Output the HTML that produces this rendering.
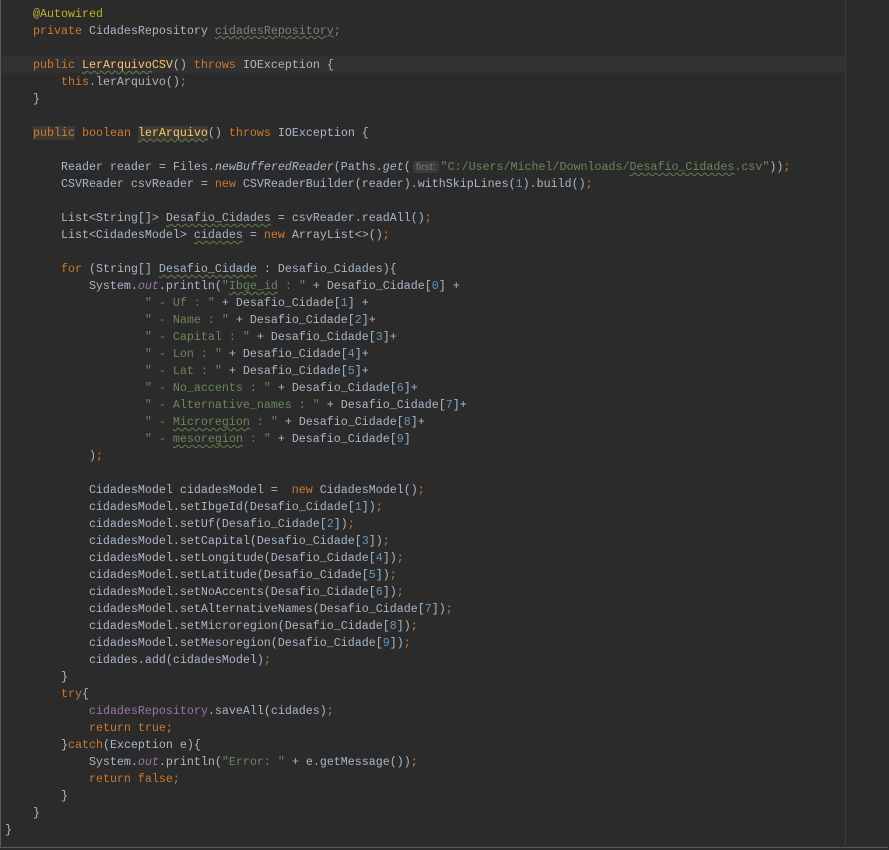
<!DOCTYPE html>
<html><head><meta charset="utf-8"><style>
html,body{margin:0;padding:0;background:#2b2b2b;}
body{width:889px;height:850px;overflow:hidden;position:relative;}
.frame{position:absolute;left:0;top:0;width:888px;height:848px;border-left:1px solid #5a5a5a;border-bottom:1px solid #5a5a5a;box-sizing:border-box;}
.margin{position:absolute;left:845px;top:0;width:1px;height:848px;background:#3c3c3c;}
.cur{position:absolute;left:1px;top:56px;width:844px;height:17px;background:#313131;}
pre{position:absolute;left:5px;top:6px;margin:0;font-family:"Liberation Mono",monospace;font-size:11.67px;line-height:17px;color:#a9b7c6;}
.k{color:#cc7832}.s{color:#6a8759}.a{color:#bbb529}.f{color:#9876aa}.n{color:#6897bb}.m{color:#ffc66d}.i{font-style:italic}
.w{text-decoration:underline wavy #6a7a4a;text-decoration-thickness:1px;text-underline-offset:2px}
.g{color:#808080;text-decoration:underline wavy #6a7a4a;text-decoration-thickness:1px}
.h{background:#3b3b34}
.hint{background:#3b3b3b;color:#7a7a7a;font-family:"Liberation Sans",sans-serif;font-size:10.5px;padding:0 3px;border-radius:3px;margin:0 2px}
</style></head><body>
<div class="frame"></div>
<div class="cur"></div>
<div class="margin"></div>
<pre>    <span class="a">@Autowired</span>
    <span class="k">private</span> CidadesRepository <span class="g">cidadesRepository</span><span class="k">;</span>

    <span class="k">public</span> <span class="m"><span class="w">LerArquivo</span>CSV</span>() <span class="k">throws</span> IOException {
        <span class="k">this</span>.lerArquivo()<span class="k">;</span>
    }

    <span class="k h">public</span> <span class="k">boolean</span> <span class="m w h">lerArquivo</span>() <span class="k">throws</span> IOException {

        Reader reader = Files.<span class="i">newBufferedReader</span>(Paths.<span class="i">get</span>(<span class="hint">first:</span><span class="s">"C:/Users/Michel/Downloads/<span class="w">Desafio_Cidades</span>.csv"</span>))<span class="k">;</span>
        CSVReader csvReader = <span class="k">new</span> CSVReaderBuilder(reader).withSkipLines(<span class="n">1</span>).build()<span class="k">;</span>

        List&lt;String[]&gt; <span class="w">Desafio_Cidades</span> = csvReader.readAll()<span class="k">;</span>
        List&lt;CidadesModel&gt; <span class="w">cidades</span> = <span class="k">new</span> ArrayList&lt;&gt;()<span class="k">;</span>

        <span class="k">for</span> (String[] <span class="w">Desafio_Cidade</span> : Desafio_Cidades){
            System.<span class="f i">out</span>.println(<span class="s">"<span class="w">Ibge_id</span> : "</span> + Desafio_Cidade[<span class="n">0</span>] +
                    <span class="s">" - Uf : "</span> + Desafio_Cidade[<span class="n">1</span>] +
                    <span class="s">" - Name : "</span> + Desafio_Cidade[<span class="n">2</span>]+
                    <span class="s">" - Capital : "</span> + Desafio_Cidade[<span class="n">3</span>]+
                    <span class="s">" - Lon : "</span> + Desafio_Cidade[<span class="n">4</span>]+
                    <span class="s">" - Lat : "</span> + Desafio_Cidade[<span class="n">5</span>]+
                    <span class="s">" - No_accents : "</span> + Desafio_Cidade[<span class="n">6</span>]+
                    <span class="s">" - Alternative_names : "</span> + Desafio_Cidade[<span class="n">7</span>]+
                    <span class="s">" - <span class="w">Microregion</span> : "</span> + Desafio_Cidade[<span class="n">8</span>]+
                    <span class="s">" - <span class="w">mesoregion</span> : "</span> + Desafio_Cidade[<span class="n">9</span>]
            )<span class="k">;</span>

            CidadesModel cidadesModel =  <span class="k">new</span> CidadesModel()<span class="k">;</span>
            cidadesModel.setIbgeId(Desafio_Cidade[<span class="n">1</span>])<span class="k">;</span>
            cidadesModel.setUf(Desafio_Cidade[<span class="n">2</span>])<span class="k">;</span>
            cidadesModel.setCapital(Desafio_Cidade[<span class="n">3</span>])<span class="k">;</span>
            cidadesModel.setLongitude(Desafio_Cidade[<span class="n">4</span>])<span class="k">;</span>
            cidadesModel.setLatitude(Desafio_Cidade[<span class="n">5</span>])<span class="k">;</span>
            cidadesModel.setNoAccents(Desafio_Cidade[<span class="n">6</span>])<span class="k">;</span>
            cidadesModel.setAlternativeNames(Desafio_Cidade[<span class="n">7</span>])<span class="k">;</span>
            cidadesModel.setMicroregion(Desafio_Cidade[<span class="n">8</span>])<span class="k">;</span>
            cidadesModel.setMesoregion(Desafio_Cidade[<span class="n">9</span>])<span class="k">;</span>
            cidades.add(cidadesModel)<span class="k">;</span>
        }
        <span class="k">try</span>{
            <span class="f">cidadesRepository</span>.saveAll(cidades)<span class="k">;</span>
            <span class="k">return true;</span>
        }<span class="k">catch</span>(Exception e){
            System.<span class="f i">out</span>.println(<span class="s">"Error: "</span> + e.getMessage())<span class="k">;</span>
            <span class="k">return false;</span>
        }
    }
}</pre>
</body></html>
